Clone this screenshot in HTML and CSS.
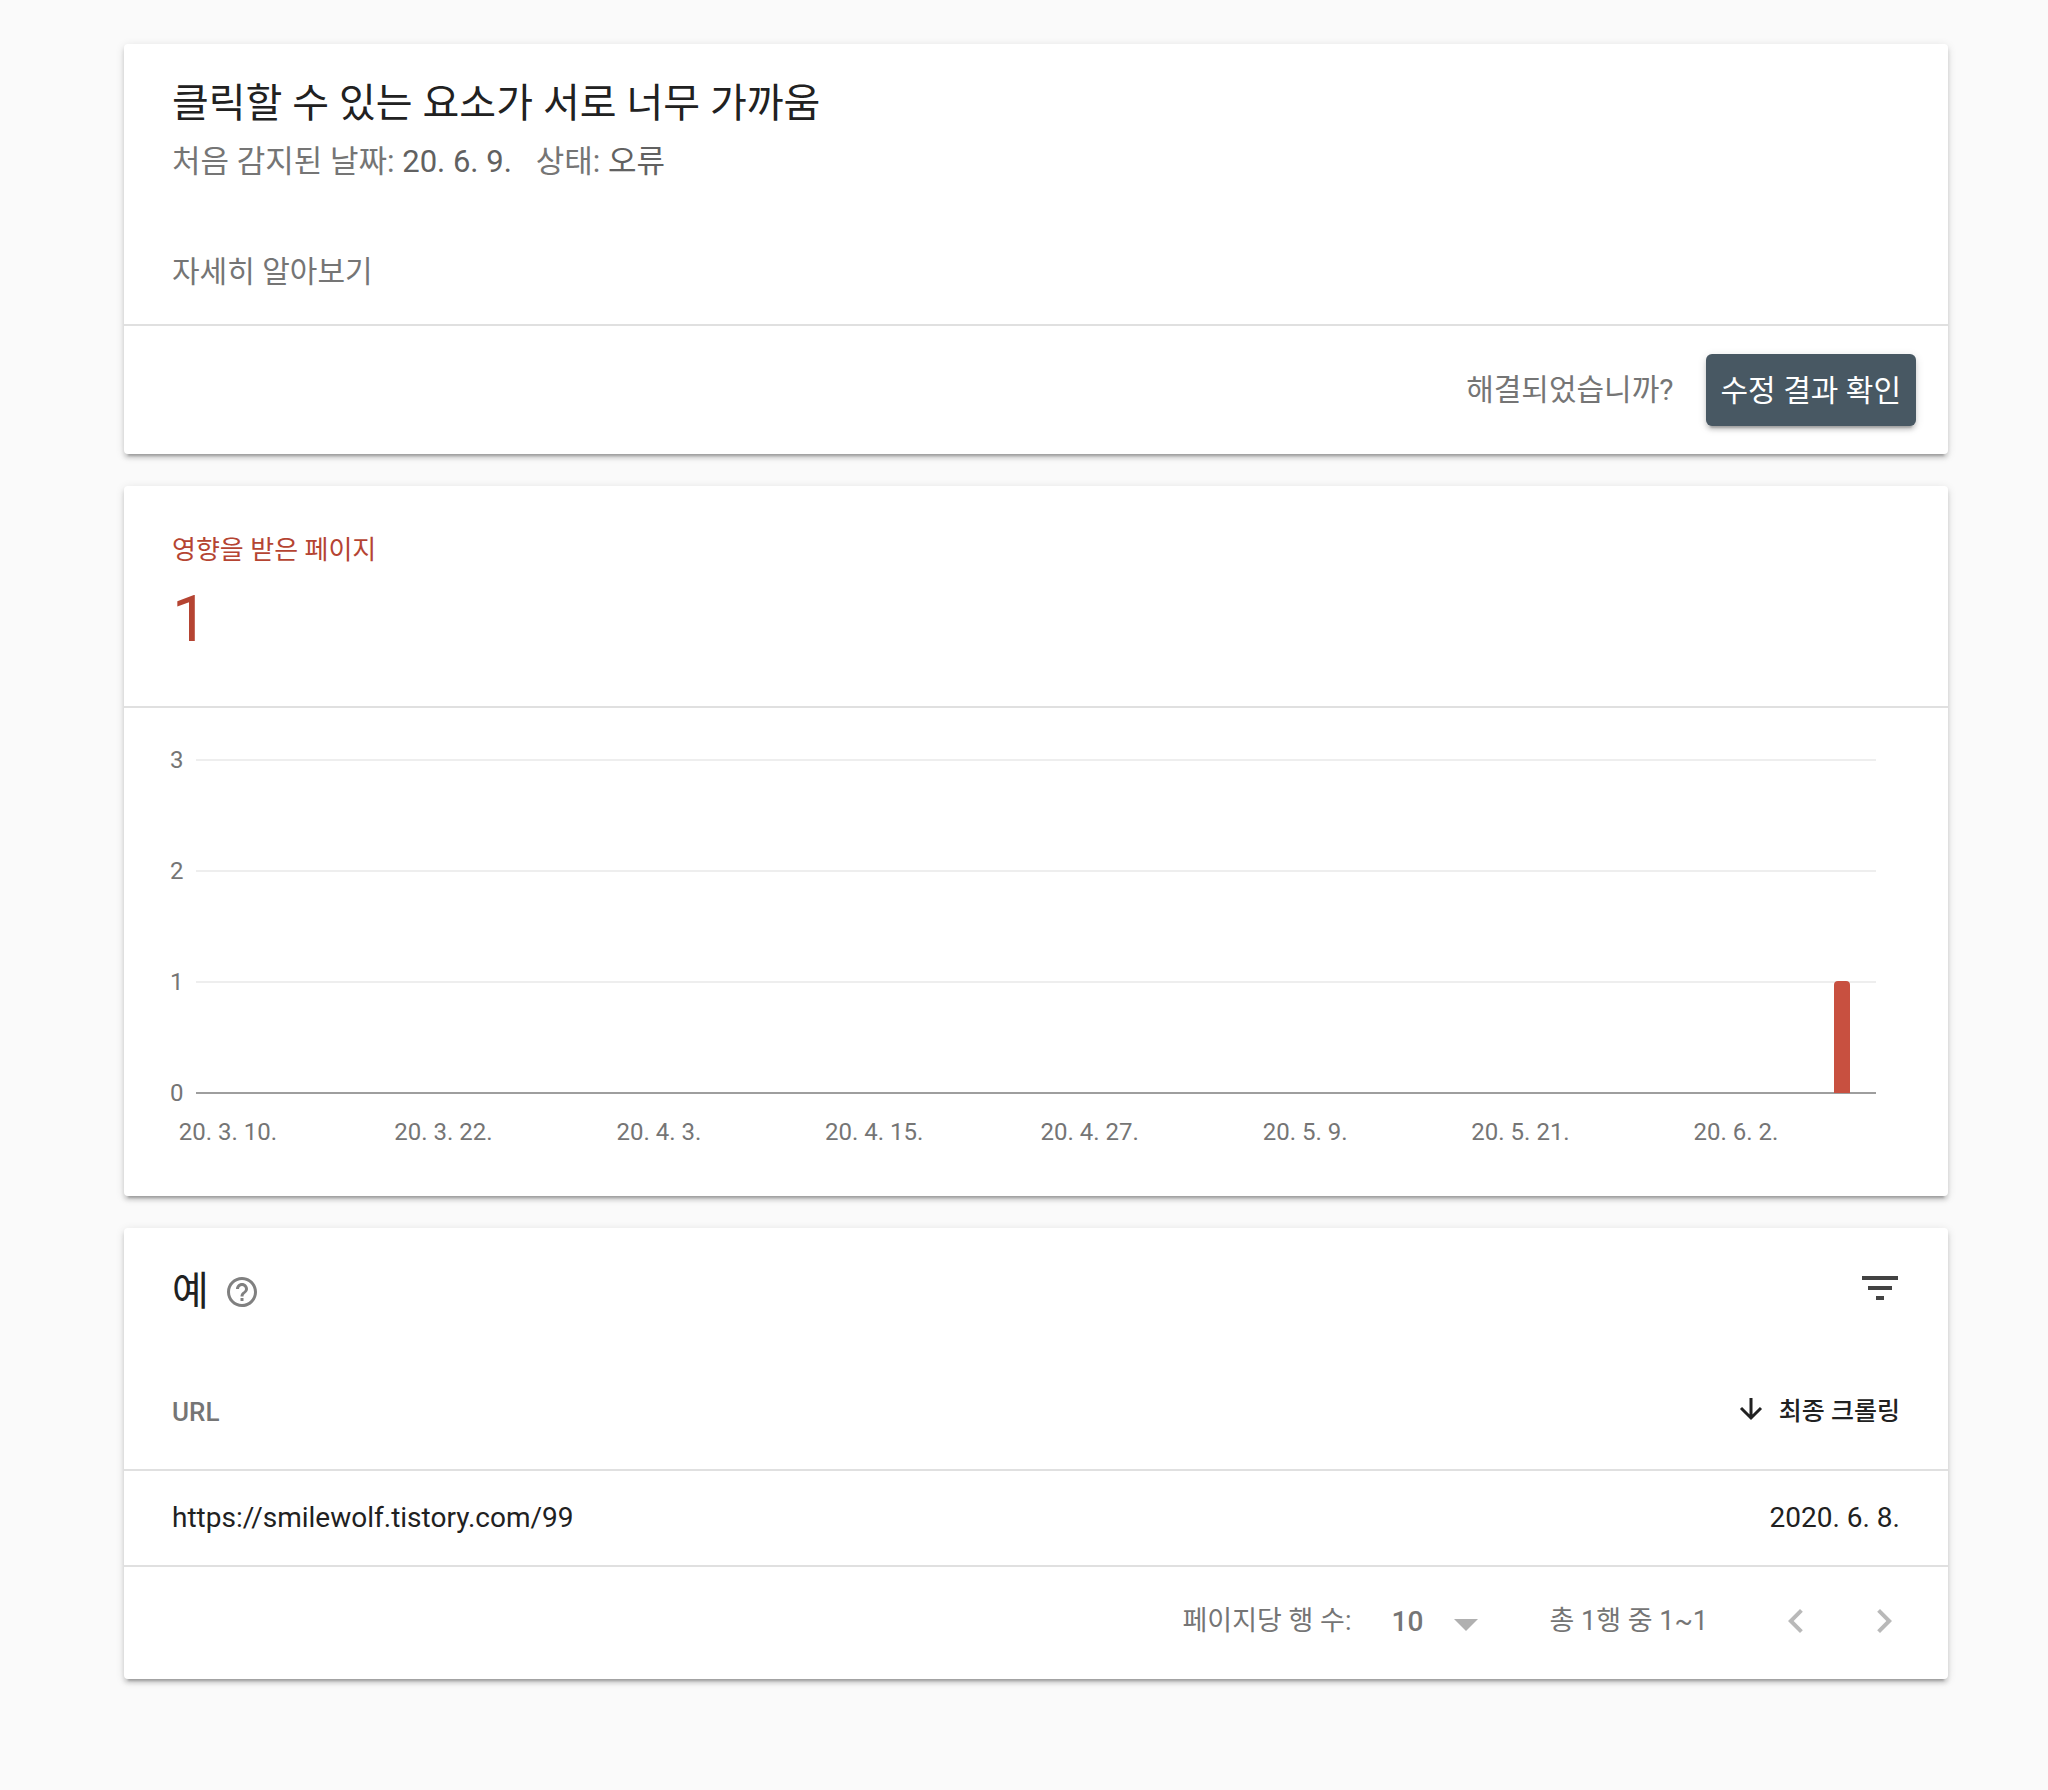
FILE: index.html
```html
<!DOCTYPE html>
<html lang="ko">
<head>
  <meta charset="UTF-8" />
  <meta name="viewport" content="width=device-width, initial-scale=1.0" />
  <title>클릭할 수 있는 요소가 서로 너무 가까움</title>
  <link rel="stylesheet" href="styles.css">
</head>
<body>
  <main class="page">
    <section class="card">
      <div class="issue">
        <h1 class="title">클릭할 수 있는 요소가 서로 너무 가까움</h1>
        <p class="meta">
          <span>처음 감지된 날짜: <b>20. 6. 9.</b></span>
          <span>상태: <b>오류</b></span>
        </p>
        <a class="learn-more" href="#">자세히 알아보기</a>
      </div>
      <div class="issue-actions">
        <span>해결되었습니까?</span>
        <button class="btn" type="button">수정 결과 확인</button>
      </div>
    </section>

    <section class="card">
      <div class="stat">
        <h2 class="stat-label">영향을 받은 페이지</h2>
        <div class="stat-value">1</div>
      </div>
      <div class="chart">
        <div class="plot">
          <div class="grid-row"><span>3</span></div>
          <div class="grid-row"><span>2</span></div>
          <div class="grid-row"><span>1</span></div>
          <div class="grid-row axis"><span>0</span></div>
          <div class="bar"></div>
        </div>
        <div class="dates">
          <span>20. 3. 10.</span>
          <span>20. 3. 22.</span>
          <span>20. 4. 3.</span>
          <span>20. 4. 15.</span>
          <span>20. 4. 27.</span>
          <span>20. 5. 9.</span>
          <span>20. 5. 21.</span>
          <span>20. 6. 2.</span>
        </div>
      </div>
    </section>

    <section class="card">
      <div class="examples-head">
        <div class="examples-title">
          <h2 class="title">예</h2>
          <button class="icon-btn help" type="button" aria-label="도움말">
            <svg viewBox="0 0 24 24" width="36" height="36"><path d="M11 18h2v-2h-2v2zm1-16C6.480 2 2 6.480 2 12s4.480 10 10 10 10-4.480 10-10S17.520 2 12 2zm0 18c-4.410 0-8-3.590-8-8s3.590-8 8-8 8 3.590 8 8-3.590 8-8 8zm0-14c-2.210 0-4 1.790-4 4h2c0-1.100.9-2 2-2s2 .9 2 2c0 2-3 1.750-3 5h2c0-2.250 3-2.500 3-5 0-2.210-1.790-4-4-4z"/></svg>
          </button>
        </div>
        <button class="icon-btn filter" type="button" aria-label="필터">
          <svg viewBox="0 0 24 24" width="48" height="48"><path d="M10 18h4v-2h-4v2zM3 6v2h18V6H3zm3 7h12v-2H6v2z"/></svg>
        </button>
      </div>

      <table class="examples">
        <thead>
          <tr>
            <th scope="col">URL</th>
            <th scope="col">
              <button class="sort" type="button">
                <svg viewBox="0 0 24 24" width="24" height="24"><path d="M12 1v20M2 11l10 10 10-10"/></svg>
                최종 크롤링
              </button>
            </th>
          </tr>
        </thead>
        <tbody>
          <tr>
            <td>https://smilewolf.tistory.com/99</td>
            <td>2020. 6. 8.</td>
          </tr>
        </tbody>
      </table>

      <div class="pager">
        <label for="rows">페이지당 행 수:</label>
        <div class="select">
          <select id="rows">
            <option>10</option>
            <option>25</option>
            <option>50</option>
          </select>
          <svg viewBox="0 0 24 12" width="24" height="12"><path d="M0 0h24L12 12z"/></svg>
        </div>
        <span class="range">총 1행 중 1~1</span>
        <button class="icon-btn" type="button" aria-label="이전" disabled>
          <svg viewBox="0 0 24 24" width="48" height="48"><path d="M15.410 7.410L14 6l-6 6 6 6 1.410-1.410L10.830 12z"/></svg>
        </button>
        <button class="icon-btn" type="button" aria-label="다음" disabled>
          <svg viewBox="0 0 24 24" width="48" height="48"><path d="M10 6L8.590 7.410 13.170 12l-4.580 4.590L10 18l6-6z"/></svg>
        </button>
      </div>
    </section>
  </main>
</body>
</html>
```

FILE: styles.css
```css
* {
  box-sizing: border-box;
}
body {
  margin: 0;
  background: #fafafa;
  color: #212121;
  font-family: Roboto, 'Noto Sans CJK KR', sans-serif;
  font-size: 28px;
  line-height: 40px;
}
h1, h2, p {
  margin: 0;
  font-weight: 400;
}
button, select {
  font-family: inherit;
  border: none;
  padding: 0;
  background: none;
  cursor: pointer;
}
svg {
  display: block;
  fill: currentColor;
}

.page {
  display: flex;
  flex-direction: column;
  gap: 32px;
  padding: 44px 100px 44px 124px;
}
.card {
  background: #fff;
  border-radius: 4px;
  box-shadow: 0 4px 4px rgba(0, 0, 0, 0.14), 0 2px 10px rgba(0, 0, 0, 0.12), 0 6px 2px -4px rgba(0, 0, 0, 0.2);
}
.title {
  font-size: 40px;
  line-height: 60px;
}

/* issue summary */
.issue {
  padding: 30px 48px;
  border-bottom: 2px solid #e0e0e0;
}
.meta {
  display: flex;
  gap: 24px;
  margin: 8px 0 68px;
  font-size: 31px;
  color: #757575;
}
.meta b {
  font-weight: 400;
  color: #616161;
}
.learn-more {
  display: block;
  width: fit-content;
  font-size: 30px;
  line-height: 44px;
  color: #757575;
  text-decoration: none;
}
.issue-actions {
  display: flex;
  justify-content: flex-end;
  align-items: center;
  gap: 32px;
  padding: 28px 32px;
  font-size: 30px;
  color: #757575;
}
.btn {
  height: 72px;
  padding: 0 15px 4px;
  border-radius: 6px;
  background: #485863;
  color: #fff;
  font-size: 30px;
  box-shadow: 0 4px 4px rgba(0, 0, 0, 0.14), 0 2px 10px rgba(0, 0, 0, 0.12), 0 6px 2px -4px rgba(0, 0, 0, 0.2);
}

/* affected pages */
.stat {
  padding: 44px 48px;
  border-bottom: 2px solid #e0e0e0;
  color: #b54432;
}
.stat-label {
  font-size: 26px;
}
.stat-value {
  margin: 12px 0 4px;
  font-size: 64px;
  line-height: 76px;
}
.chart {
  padding: 0 72px 44px 46px;
  font-size: 24px;
  color: #757575;
}
.plot {
  position: relative;
  margin-top: -4px;
}
.grid-row {
  display: flex;
  align-items: center;
  gap: 12px;
  height: 111px;
}
.grid-row::after {
  content: "";
  flex: 1;
  height: 2px;
  background: #eee;
}
.axis::after {
  background: #9e9e9e;
}
.bar {
  position: absolute;
  right: 26px;
  bottom: 55px;
  width: 16px;
  height: 112px;
  border-radius: 4px 4px 0 0;
  background: #c85040;
}
.dates {
  display: flex;
  justify-content: space-between;
  margin: -36px 90px 0 8px;
}
.dates span {
  width: 100px;
  text-align: center;
}

/* examples */
.examples-head {
  display: flex;
  align-items: center;
  justify-content: space-between;
  padding: 26px 44px 32px 48px;
}
.examples-title {
  display: flex;
  align-items: center;
  gap: 15px;
  padding-top: 8px;
}
.icon-btn:disabled {
  color: #b9b9b9;
  cursor: default;
}
.help {
  color: #808080;
}
.filter {
  color: #424242;
}
.examples {
  width: 100%;
  border-collapse: collapse;
}
.examples th, .examples td {
  padding: 0 48px;
  border-bottom: 2px solid #e0e0e0;
  text-align: left;
}
.examples th {
  height: 116px;
  font-size: 26px;
  font-weight: 500;
  color: #757575;
}
.examples td {
  height: 96px;
}
.examples th:last-child, .examples td:last-child {
  text-align: right;
}
.sort {
  display: inline-flex;
  align-items: center;
  gap: 16px;
  font-size: 25px;
  font-weight: 500;
  color: #212121;
}
.sort svg {
  fill: none;
  stroke: currentColor;
  stroke-width: 3;
}
.pager {
  display: flex;
  align-items: center;
  justify-content: flex-end;
  gap: 40px;
  padding: 30px 40px 34px;
  font-size: 27px;
  color: #757575;
}
.select {
  display: grid;
  align-items: center;
  width: 86px;
}
.select select, .select svg {
  grid-area: 1 / 1;
}
.select select {
  appearance: none;
  font-size: 28px;
  font-weight: 500;
  color: #757575;
}
.select svg {
  justify-self: end;
  margin-top: 8px;
  color: #b0b0b0;
  pointer-events: none;
}
.range {
  margin: 0 24px 0 32px;
}
```
